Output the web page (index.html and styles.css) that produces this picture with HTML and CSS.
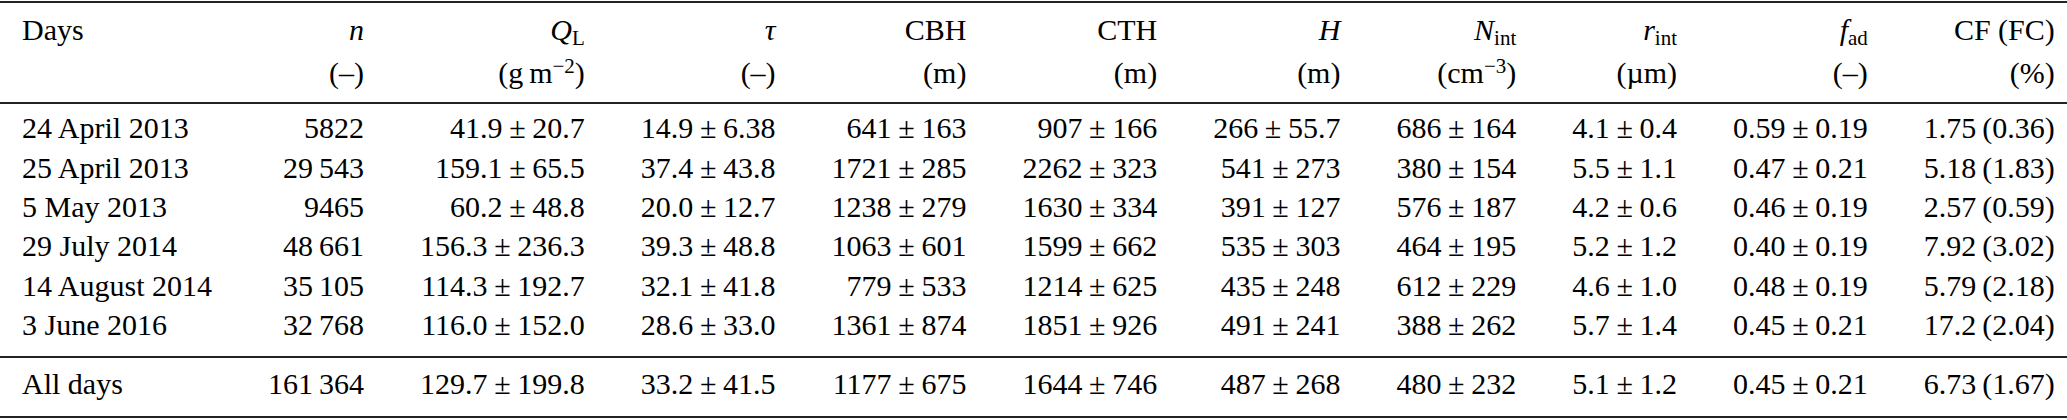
FILE: index.html
```html
<!DOCTYPE html>
<html>
<head>
<meta charset="utf-8">
<title>Cloud statistics per day</title>
<link rel="stylesheet" href="styles.css">
</head>
<body>
<table class="summary">
  <thead>
    <tr>
      <th>Days</th>
      <th><i>n</i><br>(–)</th>
      <th><i>Q</i><sub>L</sub><br>(g&#8201;m<sup>−2</sup>)</th>
      <th><i>τ</i><br>(–)</th>
      <th>CBH<br>(m)</th>
      <th>CTH<br>(m)</th>
      <th><i>H</i><br>(m)</th>
      <th><i>N</i><sub>int</sub><br>(cm<sup>−3</sup>)</th>
      <th><i>r</i><sub>int</sub><br>(µm)</th>
      <th><i>f</i><sub>ad</sub><br>(–)</th>
      <th>CF (FC)<br>(%)</th>
    </tr>
  </thead>
  <tbody class="days">
    <tr>
      <td>24 April 2013</td><td>5822</td>
      <td>41.9<span class="pm">±</span>20.7</td><td>14.9<span class="pm">±</span>6.38</td>
      <td>641<span class="pm">±</span>163</td><td>907<span class="pm">±</span>166</td>
      <td>266<span class="pm">±</span>55.7</td><td>686<span class="pm">±</span>164</td>
      <td>4.1<span class="pm">±</span>0.4</td><td>0.59<span class="pm">±</span>0.19</td>
      <td>1.75&#8201;(0.36)</td>
    </tr>
    <tr>
      <td>25 April 2013</td><td>29&#8201;543</td>
      <td>159.1<span class="pm">±</span>65.5</td><td>37.4<span class="pm">±</span>43.8</td>
      <td>1721<span class="pm">±</span>285</td><td>2262<span class="pm">±</span>323</td>
      <td>541<span class="pm">±</span>273</td><td>380<span class="pm">±</span>154</td>
      <td>5.5<span class="pm">±</span>1.1</td><td>0.47<span class="pm">±</span>0.21</td>
      <td>5.18&#8201;(1.83)</td>
    </tr>
    <tr>
      <td>5 May 2013</td><td>9465</td>
      <td>60.2<span class="pm">±</span>48.8</td><td>20.0<span class="pm">±</span>12.7</td>
      <td>1238<span class="pm">±</span>279</td><td>1630<span class="pm">±</span>334</td>
      <td>391<span class="pm">±</span>127</td><td>576<span class="pm">±</span>187</td>
      <td>4.2<span class="pm">±</span>0.6</td><td>0.46<span class="pm">±</span>0.19</td>
      <td>2.57&#8201;(0.59)</td>
    </tr>
    <tr>
      <td>29 July 2014</td><td>48&#8201;661</td>
      <td>156.3<span class="pm">±</span>236.3</td><td>39.3<span class="pm">±</span>48.8</td>
      <td>1063<span class="pm">±</span>601</td><td>1599<span class="pm">±</span>662</td>
      <td>535<span class="pm">±</span>303</td><td>464<span class="pm">±</span>195</td>
      <td>5.2<span class="pm">±</span>1.2</td><td>0.40<span class="pm">±</span>0.19</td>
      <td>7.92&#8201;(3.02)</td>
    </tr>
    <tr>
      <td>14 August 2014</td><td>35&#8201;105</td>
      <td>114.3<span class="pm">±</span>192.7</td><td>32.1<span class="pm">±</span>41.8</td>
      <td>779<span class="pm">±</span>533</td><td>1214<span class="pm">±</span>625</td>
      <td>435<span class="pm">±</span>248</td><td>612<span class="pm">±</span>229</td>
      <td>4.6<span class="pm">±</span>1.0</td><td>0.48<span class="pm">±</span>0.19</td>
      <td>5.79&#8201;(2.18)</td>
    </tr>
    <tr>
      <td>3 June 2016</td><td>32&#8201;768</td>
      <td>116.0<span class="pm">±</span>152.0</td><td>28.6<span class="pm">±</span>33.0</td>
      <td>1361<span class="pm">±</span>874</td><td>1851<span class="pm">±</span>926</td>
      <td>491<span class="pm">±</span>241</td><td>388<span class="pm">±</span>262</td>
      <td>5.7<span class="pm">±</span>1.4</td><td>0.45<span class="pm">±</span>0.21</td>
      <td>17.2&#8201;(2.04)</td>
    </tr>
  </tbody>
  <tbody class="total">
    <tr>
      <td>All days</td><td>161&#8201;364</td>
      <td>129.7<span class="pm">±</span>199.8</td><td>33.2<span class="pm">±</span>41.5</td>
      <td>1177<span class="pm">±</span>675</td><td>1644<span class="pm">±</span>746</td>
      <td>487<span class="pm">±</span>268</td><td>480<span class="pm">±</span>232</td>
      <td>5.1<span class="pm">±</span>1.2</td><td>0.45<span class="pm">±</span>0.21</td>
      <td>6.73&#8201;(1.67)</td>
    </tr>
  </tbody>
</table>
</body>
</html>
```

FILE: styles.css
```css
body {
  margin: 0;
  background: #fff;
  color: #000;
  font-family: "Liberation Serif", "Times New Roman", serif;
  font-size: 30px;
}

.summary {
  width: 100%;
  margin-top: 1px;
  border-collapse: separate;
  border-spacing: 0;
}

.summary th,
.summary td {
  padding: 0 28px;
  text-align: right;
  white-space: nowrap;
  vertical-align: top;
  font-weight: normal;
}

.summary th:first-child,
.summary td:first-child {
  text-align: left;
  padding-left: 22px;
}

.summary th:last-child,
.summary td:last-child {
  padding-right: 30px;
}

/* header: two lines, rule above and below */
.summary thead th {
  line-height: 43px;
  padding-top: 5.4px;
  padding-bottom: 7.6px;
  border-top: 2px solid #222;
  border-bottom: 2px solid #222;
}

.summary tbody td {
  line-height: 39.4px;
}

.days tr:first-child td {
  padding-top: 4.2px;
}

.days tr:last-child td {
  padding-bottom: 11.4px;
  border-bottom: 2px solid #222;
}

.total td {
  padding-top: 6.2px;
  padding-bottom: 12.4px;
  border-bottom: 2px solid #222;
}

.pm {
  margin: 0 0.222em;
}

sub,
sup {
  font-size: 0.7em;
  line-height: 0;
}

sub {
  vertical-align: -0.22em;
}

sup {
  vertical-align: 0.5em;
}
```
